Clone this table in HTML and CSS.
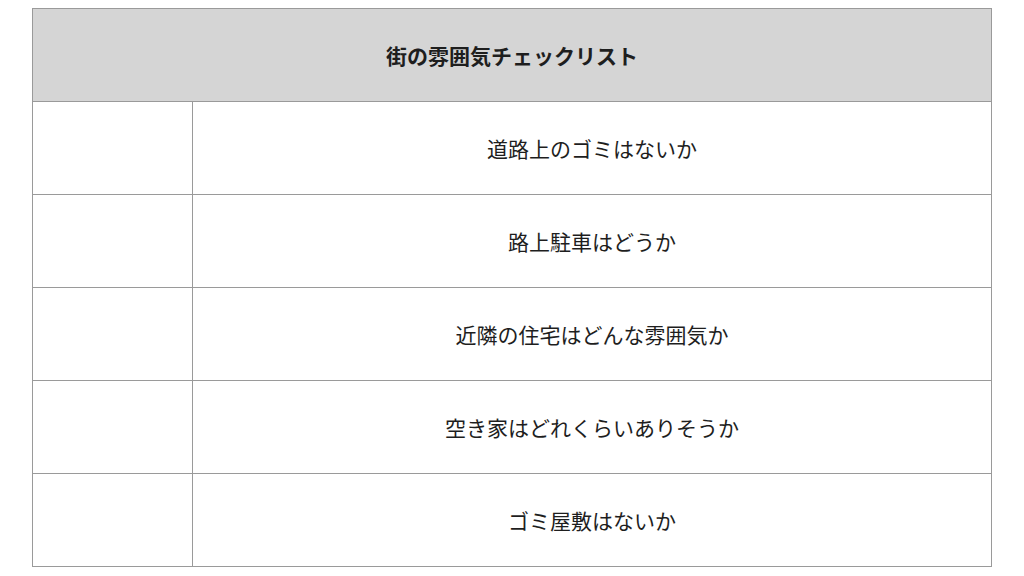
FILE: index.html
```html
<!DOCTYPE html>
<html lang="ja">
<head>
<meta charset="utf-8">
<link rel="stylesheet" href="styles.css">
</head>
<body>
<table class="checklist">
  <colgroup>
    <col class="col-check">
    <col class="col-item">
  </colgroup>
  <thead>
    <tr><th colspan="2" class="head">街の雰囲気チェックリスト</th></tr>
  </thead>
  <tbody>
    <tr><td class="check"></td><td class="item">道路上のゴミはないか</td></tr>
    <tr><td class="check"></td><td class="item">路上駐車はどうか</td></tr>
    <tr><td class="check"></td><td class="item">近隣の住宅はどんな雰囲気か</td></tr>
    <tr><td class="check"></td><td class="item">空き家はどれくらいありそうか</td></tr>
    <tr><td class="check"></td><td class="item">ゴミ屋敷はないか</td></tr>
  </tbody>
</table>
</body>
</html>
```
FILE: styles.css
```css
html, body {
  margin: 0;
  padding: 0;
  background: #ffffff;
}
body {
  padding: 8px 32px;
  font-family: "Noto Sans CJK JP", "Noto Sans", sans-serif;
}
.checklist {
  width: 960px;
  border-collapse: collapse;
  table-layout: fixed;
}
.col-check {
  width: 160px;
}
.checklist th,
.checklist td {
  border: 1px solid #9a9a9a;
  height: 92px;
  padding: 0;
  text-align: center;
  vertical-align: middle;
  font-size: 21px;
  color: #1e1e1e;
}
.head {
  background: #d5d5d5;
  font-weight: bold;
  color: #111;
}
```
